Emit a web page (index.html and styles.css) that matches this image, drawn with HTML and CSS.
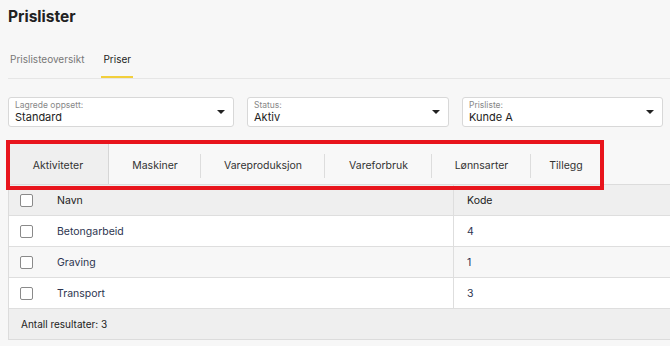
FILE: index.html
```html
<!DOCTYPE html>
<html>

<head>
    <meta charset="utf-8">
    <meta name="viewport" content="width=device-width">
    <title>Prislister</title>
    <link rel="stylesheet" href="styles.css">
</head>

<body>
    <div class="page">
        <h1 class="title">Prislister</h1>

        <div class="nav">
            <div class="nav-item">Prislisteoversikt</div>
            <div class="nav-item active">Priser</div>
        </div>

        <div class="filters">
            <div class="select">
                <div class="select-text">
                    <div class="select-label">Lagrede oppsett:</div>
                    <div class="select-value">Standard</div>
                </div>
                <span class="caret"></span>
            </div>
            <div class="select">
                <div class="select-text">
                    <div class="select-label">Status:</div>
                    <div class="select-value">Aktiv</div>
                </div>
                <span class="caret"></span>
            </div>
            <div class="select">
                <div class="select-text">
                    <div class="select-label">Prisliste:</div>
                    <div class="select-value">Kunde A</div>
                </div>
                <span class="caret"></span>
            </div>
        </div>

        <div class="tabs-wrap">
            <div class="tabs">
                <div class="tab active" style="width:100px;">Aktiviteter</div>
                <div class="tab" style="width:92px;">Maskiner</div>
                <div class="tab" style="width:124px;">Vareproduksjon</div>
                <div class="tab" style="width:107px;">Vareforbruk</div>
                <div class="tab" style="width:99px;">Lønnsarter</div>
                <div class="tab last" style="width:70px;">Tillegg</div>
            </div>
            <div class="highlight"></div>
        </div>

        <div class="grid">
            <div class="grid-row head">
                <div class="cell check"><span class="box"></span></div>
                <div class="cell name">Navn</div>
                <div class="cell code">Kode</div>
            </div>
            <div class="grid-row">
                <div class="cell check"><span class="box"></span></div>
                <div class="cell name">Betongarbeid</div>
                <div class="cell code">4</div>
            </div>
            <div class="grid-row alt">
                <div class="cell check"><span class="box"></span></div>
                <div class="cell name">Graving</div>
                <div class="cell code">1</div>
            </div>
            <div class="grid-row">
                <div class="cell check"><span class="box"></span></div>
                <div class="cell name">Transport</div>
                <div class="cell code">3</div>
            </div>
            <div class="grid-footer">Antall resultater: 3</div>
        </div>
    </div>
</body>

</html>
```

FILE: styles.css
```css
body {
    margin: 0;
    background-color: #f7f7f7;
    font-family: Inter, "Noto Sans", sans-serif;
    color: #2b2b3a;
    overflow: hidden;
}

.page {
    padding-left: 8px;
    width: 680px;
}

.title {
    margin: 0;
    padding-top: 7px;
    height: 35px;
    font-size: 15.5px;
    font-weight: 700;
    line-height: 20px;
    color: #222;
}

.nav {
    display: flex;
    height: 36px;
    border-bottom: 1px solid #e6e6e6;
    margin-right: 18px;
}

.nav-item {
    font-size: 10px;
    color: #777;
    padding: 11px 2px 0 2px;
    margin-right: 15px;
    box-sizing: border-box;
    height: 36px;
}

.nav-item.active {
    color: #222;
    border-bottom: 2px solid #f2cf3c;
}

.filters {
    display: grid;
    grid-template-columns: 226px 202px 201px;
    column-gap: 13px;
    margin-top: 18px;
}

.select {
    display: flex;
    align-items: center;
    height: 30px;
    box-sizing: border-box;
    background-color: #fff;
    border: 1px solid #d8d8d8;
    border-radius: 3px;
    padding: 0 8px 0 6px;
}

.select-text {
    flex: 1;
}

.select-label {
    font-size: 8.5px;
    color: #888;
    line-height: 10px;
}

.select-value {
    font-size: 11px;
    color: #222;
    line-height: 14px;
}

.caret {
    width: 0;
    height: 0;
    border-left: 4px solid transparent;
    border-right: 4px solid transparent;
    border-top: 4px solid #222;
}

.tabs-wrap {
    position: relative;
    margin-top: 13px;
}

.tabs {
    display: flex;
    height: 45px;
    box-sizing: border-box;
    border-bottom: 1px solid #dcdcdc;
    background-color: #f8f8f8;
    padding-top: 4px;
}

.tab {
    display: flex;
    align-items: center;
    justify-content: center;
    font-size: 10.5px;
    color: #333;
    position: relative;
    padding-top: 3px;
}

.tab::after {
    content: "";
    position: absolute;
    right: 0;
    top: 10px;
    bottom: 6px;
    border-right: 1px solid #dddddd;
}

.tab.active {
    background-color: #efefef;
    border-right: 1px solid #d6d6d6;
}

.tab.active::after,
.tab.last::after {
    display: none;
}

.highlight {
    position: absolute;
    left: -2px;
    top: 0;
    width: 590px;
    height: 42px;
    border: 4px solid #e8151d;
}

.grid {
    border-left: 1px solid #dcdcdc;
    background-color: #fff;
}

.grid-row {
    display: flex;
    height: 31px;
    box-sizing: border-box;
    border-bottom: 1px solid #dedede;
    background-color: #fff;
    font-size: 10.5px;
    color: #2d3550;
}

.grid-row.alt {
    background-color: #f7f7f7;
}

.grid-row.head {
    background-color: #efefef;
    color: #222;
}

.cell {
    display: flex;
    align-items: center;
}

.check {
    width: 48px;
    padding-left: 11px;
    box-sizing: border-box;
}

.box {
    width: 11px;
    height: 11px;
    border: 1px solid #8a8a8a;
    border-radius: 2px;
    background-color: #fff;
}

.name {
    width: 396px;
    border-right: 1px solid #dedede;
}

.code {
    padding-left: 13px;
}

.grid-footer {
    height: 31px;
    box-sizing: border-box;
    background-color: #efefef;
    border-bottom: 1px solid #dcdcdc;
    font-size: 10px;
    color: #222;
    display: flex;
    align-items: center;
    padding-left: 12px;
}
```
